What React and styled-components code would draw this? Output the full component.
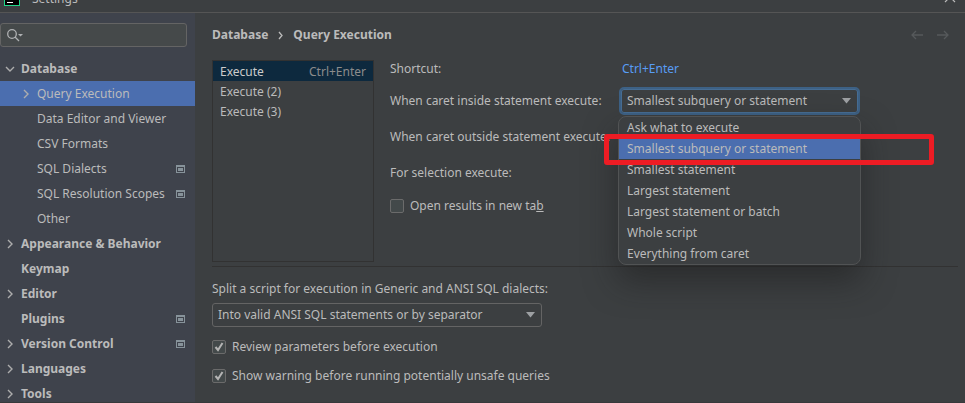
import React, { useState } from 'react';
import styled, { createGlobalStyle, css } from 'styled-components';

const Global = createGlobalStyle`
  * { box-sizing: border-box; }
  body { margin: 0; background: #3c3f41; }
  body, button, input, select {
    font-family: "Noto Sans", "Open Sans", sans-serif;
    font-size: 12px;
    line-height: 20px;
    color: #bbbbbb;
  }
  button { background: none; border: 0; padding: 0; text-align: left; }
  ul { list-style: none; margin: 0; padding: 0; }
`;

const Window = styled.div`
  height: 100vh;
  display: flex;
  flex-direction: column;
  overflow: hidden;
  background: #3c3f41;
  border-bottom: 1px solid #37393b;
`;

const TitleBar = styled.header`
  height: 13px;
  flex: none;
  display: flex;
  align-items: flex-end;
  gap: 12px;
  padding: 0 9px 4px 4px;
  overflow: hidden;
  border-bottom: 1px solid #555555;
`;

const AppLogo = styled.svg`
  flex: none;
  align-self: flex-end;
  margin-bottom: 2px;
`;

const TitleText = styled.span`
  flex: 1;
  font-size: 12px;
  line-height: 18px;
`;

const CloseButton = styled.button`
  display: flex;
  margin-bottom: 5px;
`;

const Body = styled.div`
  flex: 1;
  min-height: 0;
  display: flex;
`;

const Sidebar = styled.aside`
  width: 195px;
  flex: none;
  overflow: hidden;
  padding-top: 10px;
  background: #3f434c;
`;

const SearchField = styled.label`
  display: flex;
  align-items: center;
  height: 24px;
  margin: 0 8px 9px 0;
  padding-left: 6px;
  gap: 4px;
  border: 1px solid #646464;
  border-radius: 3px;
  background: #45494a;
`;

const SearchInput = styled.input`
  flex: 1;
  min-width: 0;
  border: 0;
  outline: 0;
  background: transparent;
`;

const TreeRow = styled.button`
  display: flex;
  align-items: center;
  width: 100%;
  height: 25px;
  padding: 0 10px 0 ${(p) => (p.$child ? 20 : 4)}px;
  gap: 6px;
  white-space: nowrap;
  font-weight: ${(p) => (p.$child ? 400 : 700)};
  background: ${(p) => (p.$selected ? '#4b6eaf' : 'transparent')};
`;

const ArrowSlot = styled.span`
  width: 11px;
  flex: none;
  display: flex;
  justify-content: center;
`;

const TreeLabel = styled.span`
  flex: 1;
`;

const Main = styled.main`
  flex: 1;
  min-width: 0;
  padding: 12px 7px 0 17px;
`;

const Heading = styled.nav`
  display: flex;
  align-items: center;
  gap: 10px;
  height: 20px;
  font-weight: 700;
  margin-bottom: 15px;
`;

const NavButtons = styled.div`
  display: flex;
  gap: 14px;
  margin-left: auto;
  padding-right: 9px;
`;

const IconButton = styled.button`
  display: flex;
`;

const Settings = styled.section`
  display: flex;
  gap: 16px;
  height: 202px;
`;

const ActionList = styled.ul`
  width: 162px;
  flex: none;
  border: 1px solid #323232;
`;

const ActionItem = styled.button`
  display: flex;
  justify-content: space-between;
  width: 100%;
  height: 20px;
  padding: 0 7px;
  line-height: 22px;
  color: ${(p) => (p.$selected ? '#cccccc' : '#bbbbbb')};
  background: ${(p) => (p.$selected ? '#0d293e' : 'transparent')};
`;

const Hint = styled.span`
  color: #8c8c8c;
`;

const Form = styled.div`
  flex: 1;
  min-width: 0;
  display: grid;
  grid-template-columns: 229px 1fr;
  grid-template-rows: 18px 46px 26px 46px 20px;
  align-items: center;
  align-content: start;
  white-space: nowrap;
  line-height: 22px;
`;

const Shortcut = styled.a`
  color: #589df6;
  text-decoration: none;
  padding-left: 3px;
`;

const SelectWrap = styled.div`
  position: relative;
  width: ${(p) => p.$width}px;
  height: ${(p) => (p.$active ? 28 : 24)}px;
`;

const Combo = styled.select`
  appearance: none;
  width: 100%;
  height: 100%;
  padding: 0 24px 0 5px;
  outline: 0;
  border-radius: 3px;
  border: 1px solid #646464;
  background: #3c3f41;
  ${(p) => p.$active && css`
    border: 2px solid #3d6185;
    border-radius: 5px;
    box-shadow: inset 0 0 0 1px #466d94;
    padding-left: 6px;
  `}
`;

const Caret = styled.svg`
  position: absolute;
  right: ${(p) => (p.$active ? 9 : 7)}px;
  top: calc(50% - 3px);
  pointer-events: none;
`;

const Popup = styled.ul`
  position: absolute;
  z-index: 1;
  top: 29px;
  left: -1px;
  right: -1px;
  border: 1px solid #515354;
  border-radius: 8px;
  background: #3c3f41;
  box-shadow: 0 16px 32px rgba(25, 25, 25, 0.5);
`;

const Option = styled.li`
  height: 21px;
  padding-left: 8px;
  line-height: 21px;
  background: ${(p) => (p.$selected ? '#4b6eaf' : 'transparent')};
`;

const Highlight = styled.div`
  position: absolute;
  z-index: 2;
  top: 47px;
  left: -15px;
  width: 330px;
  height: 31px;
  border: 5px solid #ed1c24;
  border-radius: 3px;
  pointer-events: none;
`;

const CheckLabel = styled.label`
  display: flex;
  align-items: center;
  gap: 6px;
  height: 20px;
`;

const Checkbox = styled.input`
  appearance: none;
  width: 14px;
  height: 14px;
  flex: none;
  margin: 0;
  border: 1px solid #6b6b6b;
  border-radius: 2px;
  background: #43494a;
`;

const CheckBoxWrap = styled.span`
  position: relative;
  display: flex;
`;

const CheckMark = styled.svg`
  position: absolute;
  inset: 0;
  pointer-events: none;
`;

const Divider = styled.hr`
  height: 1px;
  margin: 4px 0 12px;
  border: 0;
  background: #323232;
`;

const Script = styled.section`
  display: flex;
  flex-direction: column;
  align-items: flex-start;
  gap: 4px;
`;

const Checks = styled.div`
  display: flex;
  flex-direction: column;
  gap: 9px;
  margin-top: 6px;
`;

const Chevron = ({ open }) => (
  <svg width="10" height="10" viewBox="0 0 10 10" fill="none" stroke="#adadad" strokeWidth="1.4">
    <path d={open ? 'M1 3l4 4 4-4' : 'M3 1l4 4-4 4'} />
  </svg>
);

const ProjectIcon = () => (
  <svg width="9" height="8" viewBox="0 0 9 8">
    <path fill="#87939a" fillRule="evenodd" d="M0 0h9v8H0zM1 2v5h7V2z" />
    <path fill="#87939a" d="M2 3h5v3H2z" />
  </svg>
);

const tree = [
  { label: 'Database', arrow: true, open: true },
  { label: 'Query Execution', child: true, arrow: true },
  { label: 'Data Editor and Viewer', child: true },
  { label: 'CSV Formats', child: true },
  { label: 'SQL Dialects', child: true, project: true },
  { label: 'SQL Resolution Scopes', child: true, project: true },
  { label: 'Other', child: true },
  { label: 'Appearance & Behavior', arrow: true },
  { label: 'Keymap' },
  { label: 'Editor', arrow: true },
  { label: 'Plugins', project: true },
  { label: 'Version Control', arrow: true, project: true },
  { label: 'Languages', arrow: true },
  { label: 'Tools', arrow: true },
];

const options = [
  'Ask what to execute',
  'Smallest subquery or statement',
  'Smallest statement',
  'Largest statement',
  'Largest statement or batch',
  'Whole script',
  'Everything from caret',
];

const Check = ({ children, initial = false }) => {
  const [on, setOn] = useState(initial);
  return (
    <CheckLabel>
      <CheckBoxWrap>
        <Checkbox type="checkbox" checked={on} onChange={() => setOn(!on)} />
        {on && (
          <CheckMark width="14" height="14" viewBox="0 0 14 14" fill="none" stroke="#b4b4b4" strokeWidth="2">
            <path d="M3.5 7l2.5 3 4.5-7" />
          </CheckMark>
        )}
      </CheckBoxWrap>
      <span>{children}</span>
    </CheckLabel>
  );
};

const ComboBox = ({ id, items, value, onChange, width, active, children }) => (
  <SelectWrap $width={width} $active={active}>
    <Combo id={id} value={value} $active={active} onChange={(e) => onChange(e.target.value)}>
      {items.map((o) => <option key={o}>{o}</option>)}
    </Combo>
    <Caret $active={active} width="9" height="6" viewBox="0 0 9 6">
      <path d="M0 0h9L4.5 5.5z" fill="#9da0a3" />
    </Caret>
    {children}
  </SelectWrap>
);

export default function App() {
  const [page, setPage] = useState('Query Execution');
  const [action, setAction] = useState('Execute');
  const [inside, setInside] = useState(options[1]);

  return (
    <Window>
      <Global />
      <TitleBar>
        <AppLogo width="16" height="16" viewBox="0 0 16 16">
          <path fill="#21d789" d="M0 0h16v16H0z" />
          <path fill="#000" d="M1 1h14v14H1z" />
          <path fill="#fff" d="M3 12h6v1H3z" />
        </AppLogo>
        <TitleText>Settings</TitleText>
        <CloseButton aria-label="Close">
          <svg width="12" height="12" viewBox="0 0 12 12" stroke="#bbbbbb" strokeWidth="1.2">
            <path d="M1 1l10 10M11 1L1 11" />
          </svg>
        </CloseButton>
      </TitleBar>
      <Body>
        <Sidebar>
          <SearchField>
            <svg width="17" height="13" viewBox="0 0 17 13" fill="none" stroke="#afb1b3" strokeWidth="1.3">
              <circle cx="5" cy="5" r="4.3" />
              <path d="M8 8l4 4" />
              <path d="M11 5h5l-2.5 2.5z" fill="#afb1b3" stroke="none" />
            </svg>
            <SearchInput aria-label="Search settings" />
          </SearchField>
          {tree.map((t) => (
            <TreeRow key={t.label} $child={t.child} $selected={page === t.label} onClick={() => setPage(t.label)}>
              <ArrowSlot>{t.arrow && <Chevron open={t.open} />}</ArrowSlot>
              <TreeLabel>{t.label}</TreeLabel>
              {t.project && <ProjectIcon />}
            </TreeRow>
          ))}
        </Sidebar>
        <Main>
          <Heading>
            <span>Database</span>
            <svg width="5" height="9" viewBox="0 0 5 9" fill="none" stroke="#bbbbbb" strokeWidth="1.3">
              <path d="M1 1l3 3.5L1 8" />
            </svg>
            <span>Query Execution</span>
            <NavButtons>
              <IconButton aria-label="Back">
                <svg width="12" height="10" viewBox="0 0 12 10" fill="none" stroke="#56595b" strokeWidth="1.3">
                  <path d="M5 1L1 5l4 4M1 5h11" />
                </svg>
              </IconButton>
              <IconButton aria-label="Forward">
                <svg width="12" height="10" viewBox="0 0 12 10" fill="none" stroke="#56595b" strokeWidth="1.3">
                  <path d="M7 1l4 4-4 4M11 5H0" />
                </svg>
              </IconButton>
            </NavButtons>
          </Heading>
          <Settings>
            <ActionList>
              {['Execute', 'Execute (2)', 'Execute (3)'].map((a) => (
                <li key={a}>
                  <ActionItem $selected={a === action} onClick={() => setAction(a)}>
                    <span>{a}</span>
                    {a === 'Execute' && <Hint>Ctrl+Enter</Hint>}
                  </ActionItem>
                </li>
              ))}
            </ActionList>
            <Form>
              <span>Shortcut:</span>
              <Shortcut href="#shortcut">Ctrl+Enter</Shortcut>
              <label htmlFor="inside">When caret inside statement execute:</label>
              <ComboBox id="inside" items={options} value={inside} onChange={setInside} width={241} active>
                <Popup role="listbox" aria-label="Execution scope">
                  {options.map((o) => (
                    <Option key={o} role="option" aria-selected={o === inside} $selected={o === inside} onClick={() => setInside(o)}>
                      {o}
                    </Option>
                  ))}
                </Popup>
                <Highlight />
              </ComboBox>
              <span>When caret outside statement execute:</span>
              <span />
              <span>For selection execute:</span>
              <span />
              <Check>Open results in new ta<u>b</u></Check>
            </Form>
          </Settings>
          <Divider />
          <Script>
            <label htmlFor="split">Split a script for execution in Generic and ANSI SQL dialects:</label>
            <ComboBox id="split" items={['Into valid ANSI SQL statements or by separator']} value="Into valid ANSI SQL statements or by separator" onChange={() => {}} width={330} />
            <Checks>
              <Check initial>Review parameters before execution</Check>
              <Check initial>Show warning before running potentially unsafe queries</Check>
            </Checks>
          </Script>
        </Main>
      </Body>
    </Window>
  );
}
